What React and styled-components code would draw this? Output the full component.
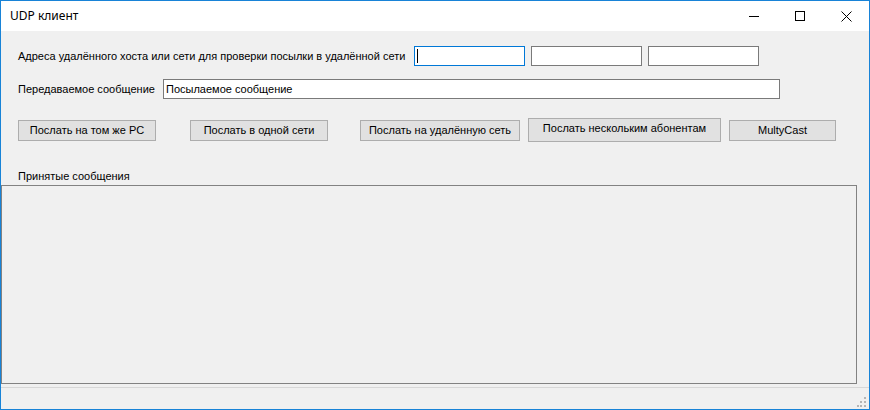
import React from "react";
import styled, { createGlobalStyle } from "styled-components";

const GlobalStyle = createGlobalStyle`
  html, body {
    margin: 0;
    padding: 0;
    background: #ffffff;
  }
  * {
    box-sizing: border-box;
  }
`

const Window = styled.div`
  width: 870px;
  height: 410px;
  border: 1px solid #1883d7;
  display: flex;
  flex-direction: column;
  background: #f0f0f0;
  font-family: "Liberation Sans", Arial, sans-serif;
  font-size: 11px;
  color: #000;
  overflow: hidden;
`

const TitleBar = styled.div`
  height: 30px;
  flex-shrink: 0;
  background: #ffffff;
  display: flex;
  align-items: center;
`

const Title = styled.div`
  flex: 1;
  padding-left: 9px;
  padding-bottom: 2px;
  font-family: "Noto Sans", "Open Sans", sans-serif;
  font-size: 12px;
  color: #000;
`

const CaptionButton = styled.div`
  width: 46px;
  height: 30px;
  display: flex;
  align-items: center;
  justify-content: center;
`

const Body = styled.div`
  flex: 1;
  display: flex;
  flex-direction: column;
`

const Row = styled.div`
  display: flex;
  align-items: center;
  padding-left: 17px;
  margin-top: ${(props) => props.mt}px;
  height: ${(props) => props.h}px;
`

const Label = styled.div`
  width: ${(props) => props.w}px;
  flex-shrink: 0;
  white-space: nowrap;
`

const InputWrap = styled.div`
  position: relative;
  margin-left: ${(props) => props.ml || 0}px;
`

const TextInput = styled.input`
  width: ${(props) => props.w}px;
  height: 20px;
  border: 1px solid ${(props) => (props.focused ? "#0078d7" : "#7a7a7a")};
  background: #fff;
  padding: 0 2px;
  font-family: "Liberation Sans", Arial, sans-serif;
  font-size: 11px;
  color: #000;
  outline: none;
  display: block;
  caret-color: transparent;
`

const Caret = styled.span`
  position: absolute;
  left: 3px;
  top: 3px;
  width: 1px;
  height: 14px;
  background: #000;
`

const Button = styled.button`
  width: ${(props) => props.w}px;
  height: ${(props) => props.h || 21}px;
  margin-left: ${(props) => props.ml || 0}px;
  background: #e1e1e1;
  border: 1px solid #adadad;
  font-family: "Liberation Sans", Arial, sans-serif;
  font-size: 11px;
  color: #000;
  padding: 0 0 ${(props) => (props.h ? 4 : 0)}px;
  flex-shrink: 0;
`

const SectionLabel = styled.div`
  padding-left: 17px;
  margin-top: 28px;
  height: 15px;
  line-height: 13px;
`

const ReceivedBox = styled.div`
  height: 199px;
  margin-right: 12px;
  border: 1px solid #828282;
  background: #f0f0f0;
`

const StatusStrip = styled.div`
  height: 22px;
  flex-shrink: 0;
  border-top: 1px solid #d7d7d7;
  display: flex;
  justify-content: flex-end;
  align-items: flex-end;
  padding: 0 2px 2px 0;
`

const Grip = () => (
  <svg width="10" height="10" viewBox="0 0 10 10">
    {[
      [7, 0],
      [3, 4],
      [7, 4],
      [0, 8],
      [3, 8],
      [7, 8],
    ].map(([x, y]) => (
      <rect key={`${x}-${y}`} x={x} y={y} width="2" height="2" fill="#b5b5b5" />
    ))}
  </svg>
)

const App = () => {
  return (
    <Window>
      <GlobalStyle />
      <TitleBar>
        <Title>UDP клиент</Title>
        <CaptionButton>
          <svg width="10" height="10" viewBox="0 0 10 10">
            <line x1="0" y1="5.5" x2="10" y2="5.5" stroke="#000" strokeWidth="1" />
          </svg>
        </CaptionButton>
        <CaptionButton>
          <svg width="10" height="10" viewBox="0 0 10 10">
            <rect x="0.5" y="0.5" width="9" height="9" fill="none" stroke="#000" strokeWidth="1" />
          </svg>
        </CaptionButton>
        <CaptionButton>
          <svg width="11" height="11" viewBox="0 0 11 11">
            <path d="M0.5 0.5 L10.5 10.5 M10.5 0.5 L0.5 10.5" stroke="#000" strokeWidth="1" />
          </svg>
        </CaptionButton>
      </TitleBar>

      <Body>
        <Row mt={15} h={20}>
          <Label w={396}>Адреса удалённого хоста или сети для проверки посылки в удалённой сети</Label>
          <InputWrap>
            <TextInput w={111} focused />
            <Caret />
          </InputWrap>
          <InputWrap ml={6}>
            <TextInput w={111} />
          </InputWrap>
          <InputWrap ml={6}>
            <TextInput w={111} />
          </InputWrap>
        </Row>

        <Row mt={13} h={20}>
          <Label w={145}>Передаваемое сообщение</Label>
          <InputWrap>
            <TextInput w={617} defaultValue="Посылаемое сообщение" />
          </InputWrap>
        </Row>

        <Row mt={19} h={24}>
          <Button w={138}>Послать на том же PC</Button>
          <Button w={138} ml={34}>Послать в одной сети</Button>
          <Button w={160} ml={32}>Послать на удалённую сеть</Button>
          <Button w={193} h={24} ml={8}>Послать нескольким абонентам</Button>
          <Button w={107} ml={8}>MultyCast</Button>
        </Row>

        <SectionLabel>Принятые сообщения</SectionLabel>
        <ReceivedBox />
      </Body>

      <StatusStrip>
        <Grip />
      </StatusStrip>
    </Window>
  );
}

export default App;
